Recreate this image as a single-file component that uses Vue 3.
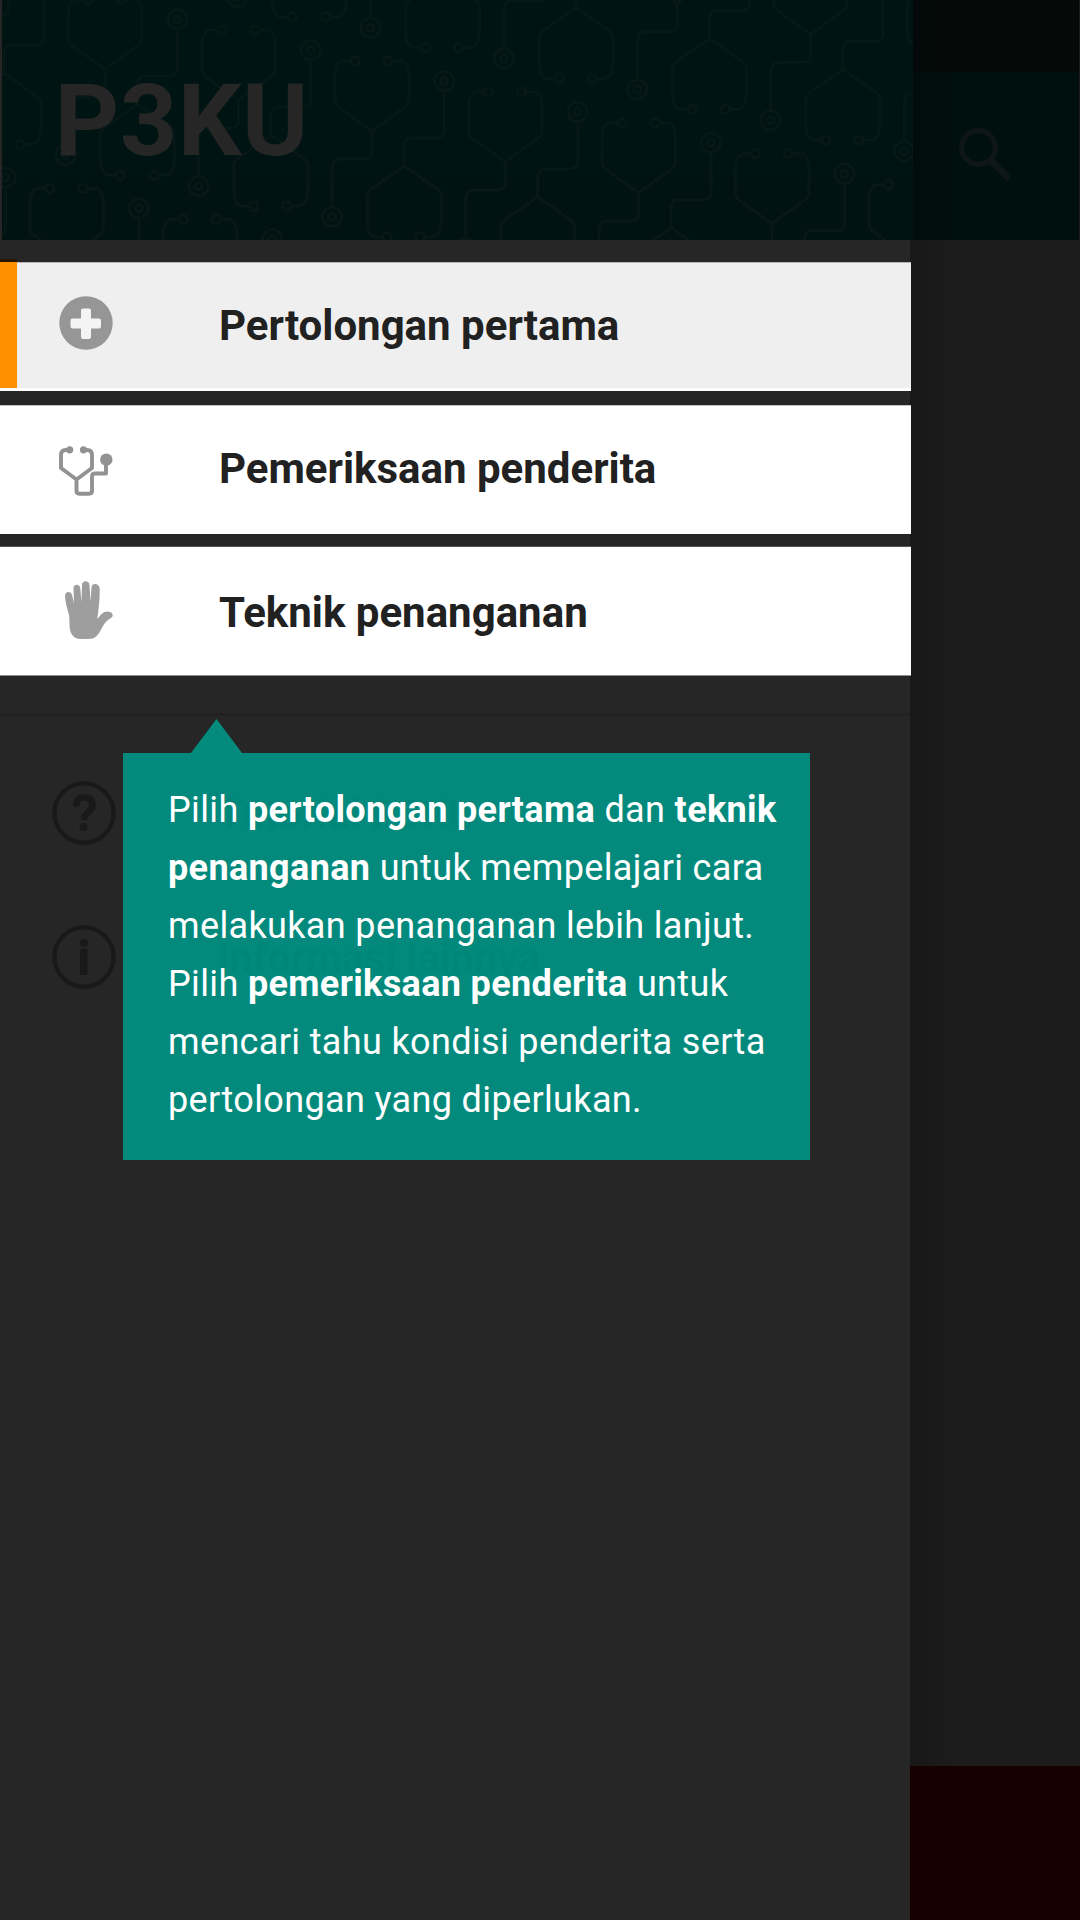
<script setup>
const menu = [
  { id: 'first-aid', label: 'Pertolongan pertama', active: true },
  { id: 'exam', label: 'Pemeriksaan penderita' },
  { id: 'technique', label: 'Teknik penanganan' },
]

// Repeating stethoscope motif laid out on a skewed lattice
const motifs = []
for (let row = -1; row <= 1; row++) {
  for (let col = -5; col <= 7; col++) {
    motifs.push({
      key: `${row}:${col}`,
      x: 371.7 + col * 133.4 - row * 38.5,
      y: 131 + col * 30.9 + row * 189.3,
    })
  }
}
</script>

<template>
  <div class="screen">
    <aside class="drawer">
      <header class="head">
        <svg class="pattern" width="911" height="240" viewBox="2 0 911 240">
          <defs>
            <g id="motif">
              <circle cx="-16.5" cy="-70" r="4.3" />
              <circle cx="16.5" cy="-70" r="4.3" />
              <path d="M-21-70H-27Q-36.500-70-36.500-54V-31Q-36.500-26-32-23L0 0L32-23Q37-26 37-31V-54Q37-70 28-70H21M0 0V21Q0 28-7 28H-31Q-39.500 28-39.500 38V76" />
              <circle cx="-39.700" cy="86" r="9.700" />
              <circle cx="-39.700" cy="86" r="3.500" />
              <path d="M32.600 35V15Q32.600 7 40 7H64Q72.600 7 72.600-1V-40M11 106H4Q-4.500 106-4.500 88V64Q-4.500 61 1 57L32.600 35L64 57Q69.500 61 69.500 64V88Q69.500 106 60 106H53" />
              <circle cx="15.500" cy="106" r="4.300" />
              <circle cx="48.500" cy="106" r="4.300" />
              <circle cx="72.500" cy="-50" r="9.700" />
              <circle cx="72.500" cy="-50" r="3.500" />
            </g>
          </defs>
          <g class="lines">
            <use v-for="m in motifs" :key="m.key" href="#motif" :x="m.x" :y="m.y" />
          </g>
        </svg>
        <h1>P3KU</h1>
      </header>

      <nav class="menu">
        <a v-for="item in menu" :key="item.id" class="item" :class="[item.id, { active: item.active }]">
          <span class="slot">
            <svg v-if="item.id === 'first-aid'" width="54" height="54" viewBox="0 0 54 54">
              <circle cx="27" cy="27" r="26.700" fill="#969696" />
              <path d="M24 12.500h6q2 0 2 2V22.500h8q2 0 2 2v6q0 2-2 2H32v8.500q0 2-2 2h-6q-2 0-2-2V32.500h-8.500q-2 0-2-2v-6q0-2 2-2H22V14.500q0-2 2-2z" fill="#f4f4f4" />
            </svg>
            <svg v-else-if="item.id === 'exam'" width="54" height="54" viewBox="0 0 54 54">
              <g fill="none" stroke="#929292" stroke-width="3.900" stroke-linejoin="round">
                <path d="M10 6H7Q2 6 2 11V24L17.500 35.500L33 24V11Q33 6 28 6H25M17.500 35V47Q17.500 49.700 20.500 49.700H30Q33 49.700 33 47V32.500Q33 29.500 36 29.500H47V17" />
              </g>
              <g fill="#929292"><circle cx="10.700" cy="5.800" r="3.600" /><circle cx="24.500" cy="5.800" r="3.600" /><circle cx="47.300" cy="15.700" r="6.200" /></g>
            </svg>
            <svg v-else width="54" height="60" viewBox="0 0 54 60">
              <path d="M6 16C6 11 12 11 13 15L15 23L14.500 9C14 3.500 20.500 3.500 21.200 8L22.500 22L23 5C23 0 30 0 30.500 5L31.500 22L32.500 7C33 2.500 40.500 3 40.700 9C41 19 39.500 29 38.300 39C42 35 43.500 31.500 49 31.500C54 32 55 36 52 38C43 43 44 49 38.500 55C36 58 33 59 29 59H22C14 59 10.500 53 10.500 45C10.500 39 10.500 37 9.500 33C7.500 26 6.500 22 6 16z" fill="#9e9e9e" />
            </svg>
          </span>
          <span class="label">{{ item.label }}</span>
        </a>
      </nav>

      <div class="more">
        <a class="faint">
          <svg width="64" height="64" viewBox="0 0 64 64">
            <circle cx="32" cy="32" r="29.600" fill="none" stroke="#191919" stroke-width="4.300" />
            <path d="M24.500 25.500Q24 16.500 32 16.500Q40.500 16.500 40.500 24Q40.500 28 36.500 31Q32 34.500 32 39" fill="none" stroke="#191919" stroke-width="6.500" />
            <circle cx="31.500" cy="46" r="4" fill="#191919" />
          </svg>
          <span>Tutorial P3KU</span>
        </a>
        <a class="faint">
          <svg width="64" height="64" viewBox="0 0 64 64">
            <circle cx="32" cy="32" r="29.600" fill="none" stroke="#191919" stroke-width="4.300" />
            <circle cx="32" cy="18" r="4" fill="#191919" />
            <path d="M28 24h7.500v26h-7.500z" fill="#191919" />
          </svg>
          <span>Informasi lainnya</span>
        </a>
      </div>
    </aside>

    <main class="page">
      <div class="status"></div>
      <div class="appbar">
        <svg width="56" height="56" viewBox="0 0 56 56" fill="none" stroke="#0e1715">
          <circle cx="20.500" cy="20.500" r="16.900" stroke-width="5.200" />
          <path d="M33.700 34.200L51 52" stroke-width="6.500" />
        </svg>
      </div>
      <div class="body"></div>
      <div class="bottom"></div>
    </main>

    <section class="tip">
      <svg class="arrow" width="51" height="34" viewBox="0 0 51 34"><path d="M0 34L25.500 0L51 34z" fill="#048b7d" /></svg>
      <p>
        Pilih <b>pertolongan pertama</b> dan <b>teknik</b><br />
        <b>penanganan</b> untuk mempelajari cara<br />
        melakukan penanganan lebih lanjut.<br />
        Pilih <b>pemeriksaan penderita</b> untuk<br />
        mencari tahu kondisi penderita serta<br />
        pertolongan yang diperlukan.
      </p>
    </section>
  </div>
</template>

<style>
body { margin: 0; background: #262626; }
</style>

<style scoped>
.screen {
  position: relative;
  display: flex;
  width: 1080px;
  height: 1920px;
  overflow: hidden;
  background: #262626;
  font-family: Roboto, "Liberation Sans", sans-serif;
}
.drawer { position: relative; z-index: 1; flex: none; width: 910px; height: 1920px; background: #262626; }
.head {
  position: relative;
  width: 911px;
  height: 240px;
  margin-left: 2px;
  background: linear-gradient(#001513, #001413 56%, #001211);
}
.pattern { display: block; }
.lines { fill: none; stroke: #071816; stroke-width: 2.8; }
h1 {
  position: absolute;
  left: 52.5px;
  top: 61px;
  margin: 0;
  font-size: 100.5px;
  letter-spacing: 0.4px;
  line-height: 120px;
  font-weight: 700;
  color: #262626;
}
.menu {
  display: flex;
  flex-direction: column;
  width: 911px;
  padding-top: 22px;
  gap: 13px;
  background: linear-gradient(#261500, #261500) 0 19px / 17px 3px no-repeat;
}
.item {
  display: flex;
  align-items: center;
  box-sizing: border-box;
  height: 129px;
  padding-left: 59px;
  background: linear-gradient(#c4c4c4 1px, #fff 1px);
}
.item.active {
  margin-bottom: 1px;
  background:
    linear-gradient(#ff9100, #ff9100) 0 0 / 17px 126px no-repeat,
    linear-gradient(#b8b8b8 1px, #efefef 1px, #efefef 126px, #fff 126px);
}
.item.technique {
  height: 130px;
  margin-top: -1px;
  background: linear-gradient(#555 1px, #fff 1px, #fff 129px, #8f8f8f 129px);
}
.slot { display: flex; flex: none; width: 160px; }
.label { margin-top: -1px; font-size: 42px; line-height: 50px; font-weight: 700; color: #212121; white-space: nowrap; }
.first-aid .slot { margin-top: -7px; }
.exam .slot { margin-top: 3px; }
.technique .slot { margin-top: -2px; }
.technique .label { margin-top: 3px; }
.more { margin-top: 37px; border-top: 3px solid #212121; padding-top: 65px; display: flex; flex-direction: column; gap: 80px; }
.faint { display: flex; align-items: center; height: 64px; padding-left: 52px; }
.faint span { margin-left: 101px; font-size: 41.5px; font-weight: 700; color: #080808; }
.page { flex: 1; display: flex; flex-direction: column; background: #1c1c1c; }
.status, .appbar { box-sizing: border-box; border-right: 1px solid #1c1c1c; }
.status { height: 72px; background: linear-gradient(90deg, #030908, #050a09 40px); }
.appbar { height: 168px; display: flex; align-items: flex-start; padding: 55px 0 0 48px; background: linear-gradient(90deg, #000c0b, #00100e 50px); }
.body { flex: 1; background: linear-gradient(90deg, #181818, #1c1c1c 50px); }
.bottom { height: 154px; background: linear-gradient(90deg, #150000, #190000 20px); }
.tip {
  position: absolute;
  z-index: 2;
  left: 123px;
  top: 753px;
  box-sizing: border-box;
  width: 687px;
  height: 407px;
  padding: 28px 0 0 45px;
  background: rgba(0, 150, 135, 0.9);
}
.arrow { position: absolute; left: 68px; top: -34px; }
.tip p { margin: 0; font-size: 36px; line-height: 58px; letter-spacing: 0.36px; color: #fff; white-space: nowrap; }
.tip b { font-weight: 700; }
</style>
